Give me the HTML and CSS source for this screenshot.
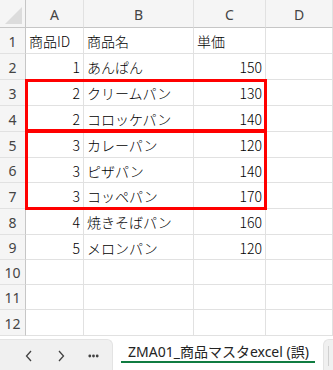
FILE: index.html
```html
<!DOCTYPE html>
<html lang="ja">
<head>
  <meta charset="UTF-8">
  <meta name="viewport" content="width=device-width, initial-scale=1.0">
  <title>ZMA01_商品マスタexcel (誤)</title>
  <link rel="stylesheet" href="styles.css">
</head>
<body>
  <div class="sheet">
    <div class="grid-wrap">
      <div class="grid">
        <div class="corner"><span class="tri"></span></div>
        <div class="colhead">A</div>
        <div class="colhead">B</div>
        <div class="colhead">C</div>
        <div class="colhead">D</div>

        <div class="rowhead">1</div>
        <div class="cell">商品ID</div>
        <div class="cell">商品名</div>
        <div class="cell">単価</div>
        <div class="cell"></div>

        <div class="rowhead">2</div>
        <div class="cell num">1</div>
        <div class="cell">あんぱん</div>
        <div class="cell num">150</div>
        <div class="cell"></div>

        <div class="rowhead">3</div>
        <div class="cell num">2</div>
        <div class="cell">クリームパン</div>
        <div class="cell num">130</div>
        <div class="cell"></div>

        <div class="rowhead">4</div>
        <div class="cell num">2</div>
        <div class="cell">コロッケパン</div>
        <div class="cell num">140</div>
        <div class="cell"></div>

        <div class="rowhead">5</div>
        <div class="cell num">3</div>
        <div class="cell">カレーパン</div>
        <div class="cell num">120</div>
        <div class="cell"></div>

        <div class="rowhead">6</div>
        <div class="cell num">3</div>
        <div class="cell">ピザパン</div>
        <div class="cell num">140</div>
        <div class="cell"></div>

        <div class="rowhead">7</div>
        <div class="cell num">3</div>
        <div class="cell">コッペパン</div>
        <div class="cell num">170</div>
        <div class="cell"></div>

        <div class="rowhead">8</div>
        <div class="cell num">4</div>
        <div class="cell">焼きそばパン</div>
        <div class="cell num">160</div>
        <div class="cell"></div>

        <div class="rowhead">9</div>
        <div class="cell num">5</div>
        <div class="cell">メロンパン</div>
        <div class="cell num">120</div>
        <div class="cell"></div>

        <div class="rowhead">10</div>
        <div class="cell"></div>
        <div class="cell"></div>
        <div class="cell"></div>
        <div class="cell"></div>

        <div class="rowhead">11</div>
        <div class="cell"></div>
        <div class="cell"></div>
        <div class="cell"></div>
        <div class="cell"></div>

        <div class="rowhead">12</div>
        <div class="cell"></div>
        <div class="cell"></div>
        <div class="cell"></div>
        <div class="cell"></div>

        <!-- red highlight boxes -->
        <div class="mark mark-1"></div>
        <div class="mark mark-2"></div>
      </div>
    </div>

    <div class="tabbar">
      <div class="nav">
        <span class="nav-btn">
          <svg width="8" height="12" viewBox="0 0 8 12"><path d="M6 1 L1.5 6 L6 11" fill="none" stroke="#424242" stroke-width="1.3"/></svg>
        </span>
        <span class="nav-btn">
          <svg width="8" height="12" viewBox="0 0 8 12"><path d="M2 1 L6.5 6 L2 11" fill="none" stroke="#424242" stroke-width="1.3"/></svg>
        </span>
        <span class="nav-btn">
          <svg width="11" height="4" viewBox="0 0 11 4"><circle cx="1.8" cy="2" r="1.4" fill="#424242"/><circle cx="5.5" cy="2" r="1.4" fill="#424242"/><circle cx="9.2" cy="2" r="1.4" fill="#424242"/></svg>
        </span>
      </div>
      <div class="tab">
        <span class="tab-label">ZMA01_商品マスタexcel (誤)</span>
      </div>
      <div class="scroll-end"><span class="scroll-line"></span></div>
    </div>
  </div>
</body>
</html>
```

FILE: styles.css
```css
/* Spreadsheet view */
html, body {
  margin: 0;
  height: 100%;
  background: #fff;
}
.sheet {
  display: flex;
  flex-direction: column;
  height: 100vh;
  overflow: hidden;
}
.grid-wrap {
  flex: 1;
  overflow: hidden;
}
.grid {
  position: relative;
  display: grid;
  grid-template-columns: 26px 58px 110px 72px 1fr;
  grid-template-rows: 28px 26px 26px 26px 26px 26px 25px 26px 26px 25px 25px 25px 26px;
  font-family: "Noto Sans CJK JP", sans-serif;
  font-weight: 300;
  font-size: 14px;
  color: #000;
}
.corner, .colhead, .rowhead, .cell {
  box-sizing: border-box;
  border-right: 1px solid #e1e1e1;
  border-bottom: 1px solid #e1e1e1;
  display: flex;
  align-items: center;
  overflow: hidden;
  white-space: nowrap;
}
.corner {
  position: relative;
  background: #f5f5f5;
  border-right-color: #c6c6c6;
  border-bottom-color: #c6c6c6;
}
.tri {
  position: absolute;
  right: 3px;
  bottom: 3px;
  width: 0;
  height: 0;
  border-left: 17px solid transparent;
  border-bottom: 17px solid #dcdcdc;
}
.colhead {
  justify-content: center;
  background: #f5f5f5;
  border-bottom-color: #c6c6c6;
  color: #444;
  font-family: "Noto Sans", sans-serif;
  font-weight: 400;
  padding-top: 1px;
}
.rowhead {
  justify-content: center;
  background: #f5f5f5;
  border-right-color: #c6c6c6;
  color: #444;
  font-family: "Noto Sans", sans-serif;
  font-weight: 400;
  padding-top: 1px;
}
.cell {
  padding: 1px 3px 0 3px;
}
.num {
  justify-content: flex-end;
}
.mark {
  position: absolute;
  left: 25px;
  width: 242px;
  box-sizing: border-box;
  border: 3px solid #ff0000;
}
.mark-1 {
  top: 79px;
  height: 53px;
}
.mark-2 {
  top: 130px;
  height: 80px;
}

/* sheet tabs */
.tabbar {
  display: flex;
  height: 31px;
  flex-shrink: 0;
}
.nav {
  box-sizing: border-box;
  width: 113px;
  display: flex;
  align-items: center;
  padding-left: 13px;
  background: #f0f0f0;
  border-top: 1px solid #e3e3e3;
  border-right: 1px solid #e3e3e3;
  border-top-right-radius: 6px;
}
.nav-btn {
  width: 32px;
  display: flex;
  justify-content: center;
  align-items: center;
  height: 20px;
  margin-top: 1px;
}
.tab {
  width: 210px;
  background: #fff;
  padding: 4px 0 0 8px;
  box-sizing: border-box;
}
.tab-label {
  display: inline-block;
  padding: 0 6px 0 7px;
  font-family: "Noto Sans", "Noto Sans CJK JP", sans-serif;
  font-size: 14px;
  line-height: 18px;
  color: #242424;
  border-bottom: 2px solid #107c41;
  white-space: nowrap;
}
.scroll-end {
  flex: 1;
  position: relative;
  background: #f0f0f0;
  border-top: 1px solid #e3e3e3;
  border-left: 1px solid #e3e3e3;
  border-top-left-radius: 6px;
}
.scroll-line {
  position: absolute;
  left: 4px;
  top: 6px;
  bottom: 4px;
  width: 1px;
  background: #d0d0d0;
}
```
